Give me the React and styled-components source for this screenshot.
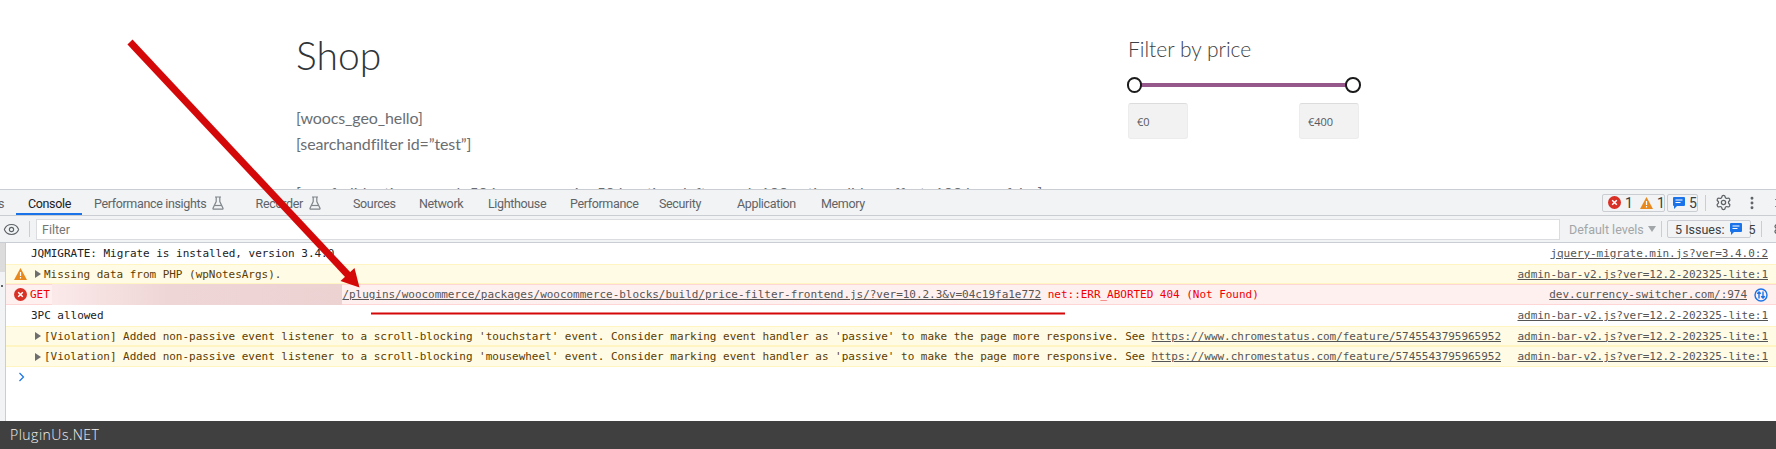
import React from "react";
import styled, { createGlobalStyle } from "styled-components";
import { Eye, Settings, MoreVertical, X } from "lucide-react";

const GlobalStyle = createGlobalStyle`
  html, body {
    margin: 0;
    padding: 0;
    background: #fff;
    overflow: hidden;
  }
  svg {
    flex: none;
  }
`;

const tabs = [
  { label: "s", width: 16, right: true },
  { label: "Console", width: 66, active: true },
  { label: "Performance insights", width: 161.6, flask: true },
  { label: "Recorder", width: 97.4, flask: true },
  { label: "Sources", width: 66 },
  { label: "Network", width: 69 },
  { label: "Lighthouse", width: 82 },
  { label: "Performance", width: 89 },
  { label: "Security", width: 78 },
  { label: "Application", width: 84 },
  { label: "Memory", width: 70 },
];

const violationText = (kind) =>
  `[Violation] Added non-passive event listener to a scroll-blocking '${kind}' event. Consider marking event handler as 'passive' to make the page more responsive. See `;

const Flask = () => (
  <svg width="12" height="14" viewBox="0 0 12 14" fill="none" stroke="#80868b" strokeWidth="1.2">
    <path d="M3 1h6M4.2 1v4.6L1 12.2c-.2.5.1.9.6.9h8.8c.5 0 .8-.4.6-.9L7.8 5.6V1" />
    <path d="M2.6 9.5h6.8" />
  </svg>
);

const ErrorIcon = () => (
  <svg width="13" height="13" viewBox="0 0 13 13">
    <circle cx="6.5" cy="6.5" r="6.5" fill="#d93025" />
    <path d="M4.2 4.2l4.6 4.6M8.8 4.2l-4.6 4.6" stroke="#fff" strokeWidth="1.5" />
  </svg>
);

const WarnIcon = () => (
  <svg width="13" height="12" viewBox="0 0 13 12">
    <path d="M6.5 0L13 12H0z" fill="#e8891d" />
    <path d="M6.5 4v4M6.5 9v1.5" stroke="#fff" strokeWidth="1.2" />
  </svg>
);

const InfoIcon = () => (
  <svg width="12" height="12" viewBox="0 0 12 12">
    <path d="M1 0h10a1 1 0 0 1 1 1v7a1 1 0 0 1-1 1H4l-3 3V9a1 1 0 0 1-1-1V1a1 1 0 0 1 1-1z" fill="#1a73e8" />
    <path d="M2.5 3h7M2.5 5.5h5" stroke="#fff" strokeWidth="1.1" />
  </svg>
);

const SyncIcon = () => (
  <svg width="14" height="14" viewBox="0 0 14 14" fill="none" stroke="#1a73e8" strokeWidth="1.4">
    <circle cx="7" cy="7" r="6" />
    <path d="M5 10.5V4M3.2 5.8L5 4l1.8 1.8M9 3.5V10M7.2 8.2L9 10l1.8-1.8" />
  </svg>
);

const App = () => {
  return (
    <>
      <GlobalStyle />
      <Screen>
        <PageArea>
          <Main>
            <Title>Shop</Title>
            <Paragraph>
              [woocs_geo_hello]
              <br />
              [searchandfilter id=”test”]
            </Paragraph>
            <Paragraph>
              [woof_slider time speed=50 image_margin=50 location=left speed=100 active_slider_offset=100 loop=false]
            </Paragraph>
          </Main>
          <Aside>
            <WidgetTitle>Filter by price</WidgetTitle>
            <Slider>
              <Handle />
              <Handle />
            </Slider>
            <PriceRow>
              <PriceBox>€0</PriceBox>
              <PriceBox>€400</PriceBox>
            </PriceRow>
          </Aside>
        </PageArea>

        <DevTools>
          <TabBar>
            {tabs.map((tab) => (
              <Tab key={tab.label} $width={tab.width} $active={tab.active} $right={tab.right}>
                {tab.label}
                {tab.flask && <Flask />}
              </Tab>
            ))}
            <Spacer />
            <CounterGroup>
              <ErrorIcon />
              <span>1</span>
              <WarnSlot><WarnIcon /></WarnSlot>
              <span>1</span>
            </CounterGroup>
            <InfoCounter>
              <InfoIcon />
              <span>5</span>
            </InfoCounter>
            <Divider $left={7} />
            <GearSlot><Settings size={17} color="#5f6368" strokeWidth={1.8} /></GearSlot>
            <KebabSlot><MoreVertical size={16} color="#5f6368" strokeWidth={2.4} /></KebabSlot>
            <CloseSlot><X size={14} color="#5f6368" strokeWidth={1.6} /></CloseSlot>
          </TabBar>

          <FilterBar>
            <EyeSlot><Eye size={17} color="#5f6368" strokeWidth={1.6} /></EyeSlot>
            <Divider $left={0} />
            <FilterInput>Filter</FilterInput>
            <LevelSelect>
              Default levels
              <Caret />
            </LevelSelect>
            <Divider $left={10} />
            <IssuesButton>
              5 Issues:
              <InfoIcon />
              <span>5</span>
            </IssuesButton>
            <Divider $left={10} />
            <ClippedGear><Settings size={16} color="#5f6368" strokeWidth={1.8} /></ClippedGear>
          </FilterBar>

          <ConsoleBody>
            <Rail>
              <RailThumb />
              <RailDot />
            </Rail>
            <Messages>
              <Row>
                <Message $indent={17}>JQMIGRATE: Migrate is installed, version 3.4.0</Message>
                <Source>jquery-migrate.min.js?ver=3.4.0:2</Source>
              </Row>
              <Row $kind="warn">
                <RowIcon $wide><WarnIcon /></RowIcon>
                <Expander />
                <Message>Missing data from PHP (wpNotesArgs).</Message>
                <Source>admin-bar-v2.js?ver=12.2-202325-lite:1</Source>
              </Row>
              <Row $kind="error">
                <RowIcon><ErrorIcon /></RowIcon>
                <Message $indent={3}>GET </Message>
                <Blurred />
                <MessageLink>/plugins/woocommerce/packages/woocommerce-blocks/build/price-filter-frontend.js/?ver=10.2.3&amp;v=04c19fa1e772</MessageLink>
                <Message>&nbsp;net::ERR_ABORTED 404 (Not Found)</Message>
                <Source>dev.currency-switcher.com/:974</Source>
                <SyncSlot><SyncIcon /></SyncSlot>
              </Row>
              <Row>
                <Message $indent={17}>3PC allowed</Message>
                <Source>admin-bar-v2.js?ver=12.2-202325-lite:1</Source>
              </Row>
              {["touchstart", "mousewheel"].map((kind) => (
                <Row key={kind} $kind="warn" $noIcon>
                  <Expander />
                  <Message>{violationText(kind)}</Message>
                  <MessageLink>https://www.chromestatus.com/feature/5745543795965952</MessageLink>
                  <Source>admin-bar-v2.js?ver=12.2-202325-lite:1</Source>
                </Row>
              ))}
              <Prompt>
                <svg width="7" height="10" viewBox="0 0 7 10" fill="none" stroke="#1a73e8" strokeWidth="1.2">
                  <path d="M1.5 1l4 4-4 4" />
                </svg>
              </Prompt>
            </Messages>
          </ConsoleBody>
        </DevTools>

        <Footer>PluginUs.NET</Footer>

        <Annotations width="1776" height="449" viewBox="0 0 1776 449">
          <path d="M130 42L349 276" stroke="#d40808" strokeWidth="7" fill="none" />
          <path d="M359.5 287.5L340.5 281L354.5 268z" fill="#d40808" />
          <path d="M371 313.5H1065" stroke="#d40808" strokeWidth="2" />
        </Annotations>
      </Screen>
    </>
  );
};

export default App;

const Screen = styled.div`
  position: relative;
  width: 1776px;
  height: 449px;
  display: flex;
  flex-direction: column;
  overflow: hidden;
  background: #fff;
`;

const PageArea = styled.section`
  height: 189px;
  flex: none;
  display: flex;
  overflow: hidden;
  padding-left: 296px;
  box-sizing: border-box;
`;

const Main = styled.div`
  width: 832px;
  flex: none;
  padding-top: 29px;
  white-space: nowrap;
`;

const Title = styled.h1`
  margin: 0 0 24px;
  font: 300 39px/52px Lato, sans-serif;
  color: #2f3438;
`;

const Paragraph = styled.p`
  margin: 0 0 23px;
  font: 400 16px/26px Lato, sans-serif;
  letter-spacing: -0.1px;
  color: #6a6e73;
`;

const Aside = styled.aside`
  width: 232px;
  flex: none;
  padding-top: 35px;
`;

const WidgetTitle = styled.h3`
  margin: 0;
  font: 300 21px/28px Lato, sans-serif;
  color: #3d4146;
`;

const Slider = styled.div`
  position: relative;
  width: 219px;
  height: 4px;
  margin: 20px 0 0 6px;
  background: #96588a;
  display: flex;
  justify-content: space-between;
  align-items: center;
`;

const Handle = styled.span`
  width: 11.5px;
  height: 11.5px;
  margin: 0 -7.5px;
  flex: none;
  border: 2px solid #1b1b1b;
  border-radius: 50%;
  background: #fff;
`;

const PriceRow = styled.div`
  width: 231px;
  display: flex;
  justify-content: space-between;
  margin-top: 16px;
`;

const PriceBox = styled.div`
  width: 60px;
  height: 36px;
  box-sizing: border-box;
  padding-left: 8px;
  display: flex;
  align-items: center;
  background: #f2f2f2;
  border: 1px solid #ececec;
  border-top-color: #dcdcdc;
  border-radius: 3px;
  font: 400 11px "Open Sans", sans-serif;
  color: #55595e;
`;

const DevTools = styled.section`
  height: 232px;
  flex: none;
  display: flex;
  flex-direction: column;
  background: #fff;
  font: 400 12.5px Roboto, sans-serif;
`;

const TabBar = styled.div`
  height: 27px;
  flex: none;
  box-sizing: border-box;
  display: flex;
  align-items: center;
  background: #f1f3f4;
  border-top: 1px solid #cacdd1;
  border-bottom: 1px solid #cacdd1;
  overflow: hidden;
`;

const Tab = styled.div`
  width: ${(p) => p.$width}px;
  height: 100%;
  flex: none;
  box-sizing: border-box;
  padding: ${(p) => (p.$right ? "1px 12px 0 0" : "1px 0 0 12px")};
  display: flex;
  align-items: center;
  justify-content: ${(p) => (p.$right ? "flex-end" : "flex-start")};
  gap: 6px;
  white-space: nowrap;
  letter-spacing: -0.35px;
  color: ${(p) => (p.$active ? "#202124" : "#5f6368")};
  box-shadow: ${(p) => (p.$active ? "inset 0 -2px 0 #1a73e8" : "none")};
`;

const Spacer = styled.div`
  flex: 1;
`;

const CounterGroup = styled.div`
  width: 63px;
  height: 18px;
  flex: none;
  box-sizing: border-box;
  padding-left: 5px;
  display: flex;
  align-items: center;
  gap: 4px;
  border: 1px solid #cacdd1;
  border-radius: 2px;
  font-size: 14px;
  color: #3c4043;
`;

const WarnSlot = styled.span`
  display: flex;
  margin-left: 3px;
`;

const InfoCounter = styled(CounterGroup)`
  width: 31px;
  margin-left: 2px;
`;

const Divider = styled.span`
  width: 1px;
  height: 16px;
  flex: none;
  margin-left: ${(p) => p.$left}px;
  background: #cacdd1;
`;

const GearSlot = styled.span`
  display: flex;
  margin-left: 9px;
`;

const KebabSlot = styled.span`
  display: flex;
  margin: 0 12px 0 12px;
`;

const CloseSlot = styled.span`
  width: 4px;
  flex: none;
  display: flex;
  overflow: hidden;
`;

const FilterBar = styled.div`
  height: 27px;
  flex: none;
  box-sizing: border-box;
  display: flex;
  align-items: center;
  background: #f1f3f4;
  border-bottom: 1px solid #cacdd1;
  overflow: hidden;
`;

const EyeSlot = styled.span`
  width: 29px;
  flex: none;
  display: flex;
  justify-content: center;
  box-sizing: border-box;
  padding-right: 7px;
`;

const FilterInput = styled.div`
  width: 1524px;
  height: 21px;
  flex: none;
  margin-left: 6px;
  box-sizing: border-box;
  padding-left: 5px;
  display: flex;
  align-items: center;
  background: #fff;
  border: 1px solid #dadce0;
  color: #757575;
`;

const LevelSelect = styled.div`
  width: 91px;
  flex: none;
  padding-left: 9px;
  box-sizing: border-box;
  display: flex;
  align-items: center;
  gap: 4px;
  white-space: nowrap;
  color: #a3a6a9;
`;

const Caret = styled.span`
  width: 0;
  height: 0;
  flex: none;
  border-left: 4px solid transparent;
  border-right: 4px solid transparent;
  border-top: 6px solid #a3a6a9;
`;

const IssuesButton = styled.div`
  width: 84px;
  height: 18px;
  flex: none;
  margin-left: 5px;
  box-sizing: border-box;
  padding: 0 5px 0 7px;
  display: flex;
  align-items: center;
  gap: 6px;
  border: 1px solid #cacdd1;
  border-radius: 2px;
  white-space: nowrap;
  color: #3c4043;
`;

const ClippedGear = styled.span`
  display: flex;
  margin-left: 11px;
`;

const ConsoleBody = styled.div`
  flex: 1;
  min-height: 0;
  display: flex;
`;

const Rail = styled.div`
  width: 6px;
  flex: none;
  box-sizing: border-box;
  background: #f1f3f4;
  border-right: 1px solid #cacdd1;
`;

const RailThumb = styled.div`
  height: 29px;
  background: #dcdcdc;
`;

const RailDot = styled.div`
  width: 2px;
  height: 2px;
  margin: 13px 0 0 1px;
  background: #5f6368;
`;

const Messages = styled.div`
  flex: 1;
  min-width: 0;
  display: flex;
  flex-direction: column;
  font: 400 11px "DejaVu Sans Mono", monospace;
  letter-spacing: -0.03px;
`;

const rowBackground = { warn: "#fffbe5", error: "#fff0f0" };
const rowBorder = { warn: "#fff5c2", error: "#ffd6d6" };
const rowColor = { warn: "#5c3c00", error: "#f00000" };

const Row = styled.div`
  height: 20.7px;
  flex: none;
  box-sizing: border-box;
  padding-left: ${(p) => (p.$noIcon ? "25px" : "8px")};
  padding-right: 8px;
  display: flex;
  align-items: center;
  white-space: pre;
  background: ${(p) => rowBackground[p.$kind] || "#fff"};
  box-shadow: ${(p) => (p.$kind ? `inset 0 1px 0 ${rowBorder[p.$kind]}, inset 0 -1px 0 ${rowBorder[p.$kind]}` : "none")};
  color: ${(p) => rowColor[p.$kind] || "#202124"};
`;

const RowIcon = styled.span`
  width: ${(p) => (p.$wide ? 17 : 13)}px;
  flex: none;
  display: flex;
`;

const Expander = styled.span`
  width: 0;
  height: 0;
  flex: none;
  margin: 0 3px 0 4px;
  border-top: 4px solid transparent;
  border-bottom: 4px solid transparent;
  border-left: 6px solid #6e6e6e;
`;

const Message = styled.span`
  margin-left: ${(p) => p.$indent || 0}px;
`;

const Blurred = styled.span`
  width: 290px;
  align-self: stretch;
  flex: none;
  margin-left: -4px;
  background: linear-gradient(90deg, #fbe9e9 0%, #efd6d6 40%, #edd2d2 100%);
`;

const MessageLink = styled.span`
  color: #555;
  text-decoration: underline;
`;

const Source = styled.span`
  margin-left: auto;
  color: #555;
  text-decoration: underline;
`;

const SyncSlot = styled.span`
  display: flex;
  width: 15px;
  margin: 0 -1px 0 7px;
`;

const Prompt = styled.div`
  height: 20px;
  padding-left: 12px;
  display: flex;
  align-items: center;
`;

const Footer = styled.footer`
  height: 28px;
  flex: none;
  box-sizing: border-box;
  padding: 0 0 2px 10px;
  display: flex;
  align-items: center;
  background: #404040;
  font: 300 14px "Open Sans", sans-serif;
  letter-spacing: 0.5px;
  color: #f0f0f0;
`;

const Annotations = styled.svg`
  position: absolute;
  inset: 0;
  pointer-events: none;
`;
